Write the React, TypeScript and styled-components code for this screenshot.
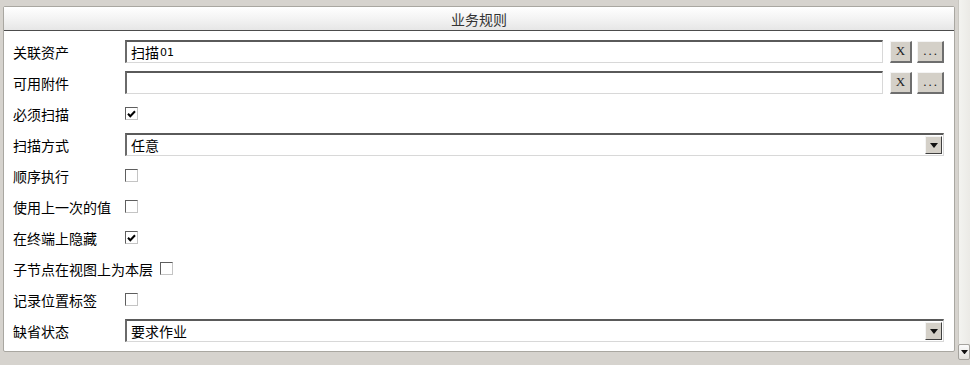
import React from "react";
import styled, { createGlobalStyle } from "styled-components";

const GlobalStyle = createGlobalStyle`
  html, body {
    margin: 0;
    padding: 0;
    background: #d6d3ce;
  }
  body {
    font-family: "Noto Sans CJK SC", "Liberation Sans", sans-serif;
    font-size: 14px;
    color: #000;
  }
`;

const Screen = styled.div`
  display: flex;
  width: 970px;
  height: 365px;
  overflow: hidden;
  box-sizing: border-box;
`;

const Main = styled.div`
  flex: 1;
  padding: 6px 3px 13px 3px;
  display: flex;
`;

const Panel = styled.section`
  flex: 1;
  display: flex;
  flex-direction: column;
  background: #fff;
  border: 1px solid #a9a7a1;
  border-radius: 2px;
`;

const Header = styled.header`
  height: 23px;
  border-bottom: 1px solid #4c4c4c;
  background: linear-gradient(#ffffff, #f1f1f1 60%, #e6e6e6);
  display: flex;
  align-items: center;
  justify-content: center;
  color: #333;
  font-size: 14px;
`;

const Body = styled.div`
  padding: 5px 10px 0 9px;
  display: flex;
  flex-direction: column;
`;

const Row = styled.div`
  height: 31px;
  display: flex;
  align-items: center;
`;

const Label = styled.span`
  min-width: 112px;
  white-space: nowrap;
  font-size: 14px;
  padding-right: 7px;
  box-sizing: border-box;
`;

const TextBox = styled.div`
  flex: 1;
  height: 23px;
  box-sizing: border-box;
  border-top: 2px solid #5a5a5a;
  border-left: 2px solid #6a6a6a;
  border-right: 1px solid #d8d8d8;
  border-bottom: 1px solid #d8d8d8;
  background: #fff;
  display: flex;
  align-items: center;
  padding-left: 4px;
  font-size: 14px;
  position: relative;
`;

const Digits = styled.span`
  font-family: "DejaVu Sans", sans-serif;
  font-size: 11px;
  margin-left: 1px;
`;

const SmallButton = styled.div<{ $w: number; $gap: number }>`
  width: ${(p) => p.$w}px;
  height: 22px;
  margin-left: ${(p) => p.$gap}px;
  box-sizing: border-box;
  background: #d4d0c8;
  border-top: 1px solid #f4f4f4;
  border-left: 1px solid #f4f4f4;
  border-right: 2px solid #6e6e6e;
  border-bottom: 2px solid #6e6e6e;
  display: flex;
  align-items: center;
  justify-content: center;
  font-family: "Liberation Serif", serif;
  font-size: 13px;
  color: #222;
`;

const Dots = styled.span`
  letter-spacing: 2px;
  margin-left: 2px;
`;

const DropButton = styled.div`
  position: absolute;
  right: 1px;
  top: 1px;
  width: 17px;
  height: 18px;
  box-sizing: border-box;
  background: #d4d0c8;
  border-top: 1px solid #f4f4f4;
  border-left: 1px solid #f4f4f4;
  border-right: 1px solid #404040;
  border-bottom: 1px solid #404040;
  display: flex;
  align-items: center;
  justify-content: center;
`;

const Check = styled.div`
  width: 13px;
  height: 13px;
  box-sizing: border-box;
  border-top: 1px solid #5e5e5e;
  border-left: 1px solid #5e5e5e;
  border-right: 1px solid #c4c4c4;
  border-bottom: 1px solid #c4c4c4;
  background: #fff;
  display: flex;
  align-items: center;
  justify-content: center;
`;

const ScrollBar = styled.div`
  width: 12px;
  padding-bottom: 5px;
  display: flex;
  flex-direction: column;
  background: #d6d3ce;
`;

const Track = styled.div`
  flex: 1;
  background: linear-gradient(90deg, #f3f3f0, #ebeae6);
  border-left: 1px solid #c9c7c1;
`;

const ArrowButton = styled.div`
  height: 16px;
  box-sizing: border-box;
  border: 1px solid #a5a39e;
  border-radius: 2px;
  background: linear-gradient(#fbfbfb, #e2e1dd);
  display: flex;
  align-items: center;
  justify-content: center;
`;

const Triangle = ({ size = 8 }: { size?: number }) => (
  <svg width={size} height={size / 2 + 1} viewBox="0 0 8 5">
    <path d="M0 0 H8 L4 5 Z" fill="#111" />
  </svg>
);

const Tick = () => (
  <svg width="9" height="8" viewBox="0 0 9 8">
    <path d="M1 3.8 L3.3 6.3 L8 1.2" stroke="#000" strokeWidth="2" fill="none" />
  </svg>
);

function PickerRow({ label, value }: { label: string; value?: React.ReactNode }) {
  return (
    <Row>
      <Label>{label}</Label>
      <TextBox>{value}</TextBox>
      <SmallButton $w={22} $gap={7}>X</SmallButton>
      <SmallButton $w={27} $gap={5}>
        <Dots>...</Dots>
      </SmallButton>
    </Row>
  );
}

function SelectRow({ label, value }: { label: string; value: string }) {
  return (
    <Row>
      <Label>{label}</Label>
      <TextBox>
        {value}
        <DropButton>
          <Triangle />
        </DropButton>
      </TextBox>
    </Row>
  );
}

function CheckRow({ label, checked }: { label: string; checked?: boolean }) {
  return (
    <Row>
      <Label>{label}</Label>
      <Check>{checked && <Tick />}</Check>
    </Row>
  );
}

export default function App() {
  return (
    <Screen>
      <GlobalStyle />
      <Main>
        <Panel>
          <Header>业务规则</Header>
          <Body>
            <PickerRow label="关联资产" value={<>扫描<Digits>01</Digits></>} />
            <PickerRow label="可用附件" />
            <CheckRow label="必须扫描" checked />
            <SelectRow label="扫描方式" value="任意" />
            <CheckRow label="顺序执行" />
            <CheckRow label="使用上一次的值" />
            <CheckRow label="在终端上隐藏" checked />
            <CheckRow label="子节点在视图上为本层" />
            <CheckRow label="记录位置标签" />
            <SelectRow label="缺省状态" value="要求作业" />
          </Body>
        </Panel>
      </Main>
      <ScrollBar>
        <Track />
        <ArrowButton>
          <Triangle size={7} />
        </ArrowButton>
      </ScrollBar>
    </Screen>
  );
}
